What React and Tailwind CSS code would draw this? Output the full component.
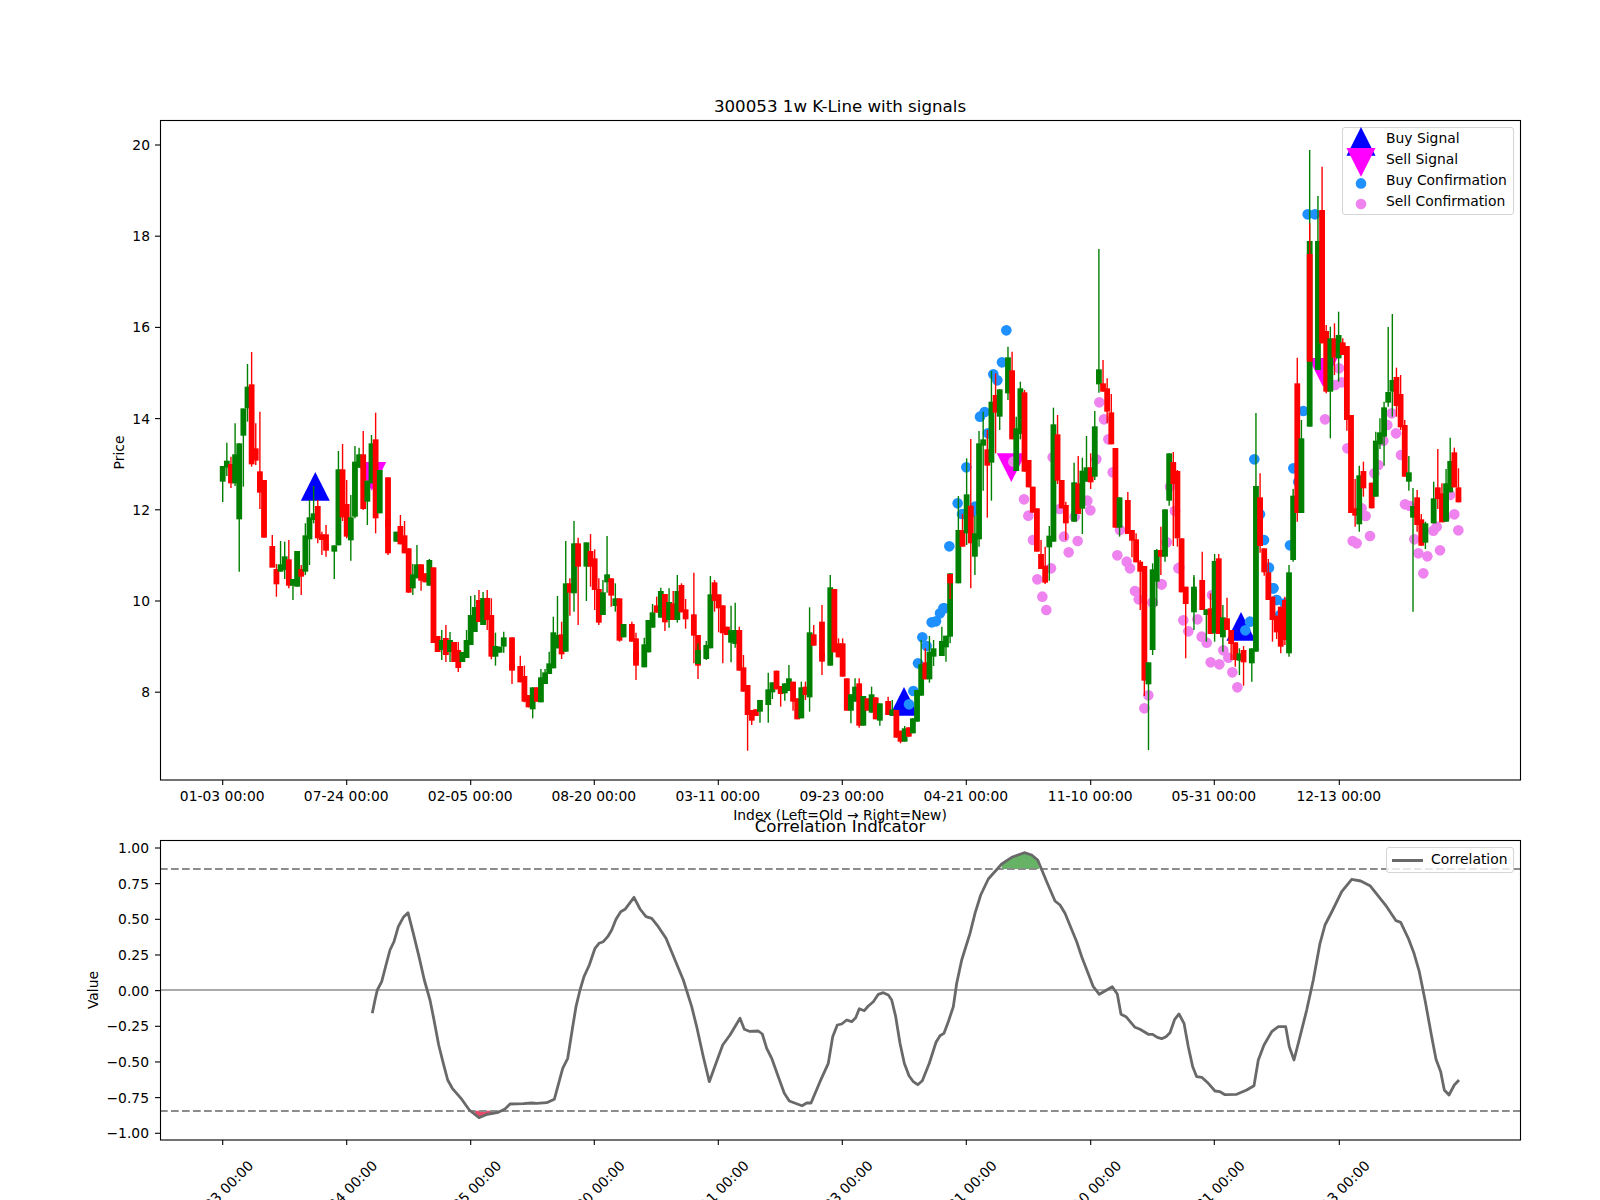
import React from 'react';

// candle rows are read off crops: [x, G|R, bodyTop, bodyBottom, wickTop, wickBottom]
const sec = (ox, oy, rows, s = 3) =>
  rows.map(([x, c, t, b, wt, wb]) => ({
    i: Math.round((ox + x / s - 222.7) / 4.133),
    up: c === 'G',
    top: oy + t / s,
    bot: oy + b / s,
    wt: oy + (wt ?? t) / s,
    wb: oy + (wb ?? b) / s,
  }));

const candles = [
  ...sec(150, 340, [
    [218, 'G', 378, 425, 378, 486], [230, 'G', 362, 383, 308, 408], [243, 'R', 372, 430, 350, 444],
    [255, 'G', 343, 430, 250, 438], [269, 'G', 310, 538, 310, 695], [281, 'G', 205, 287, 253, 440],
    [292, 'G', 140, 205, 72, 245], [308, 'R', 133, 373, 36, 380], [321, 'R', 325, 362, 250, 375],
    [335, 'R', 394, 458, 215, 507], [347, 'R', 420, 593], [362, 'R', 618, 683, 585, 670],
    [374, 'R', 687, 733, 672, 770], [387, 'G', 673, 695, 603], [402, 'G', 649, 690, 605, 717],
    [414, 'R', 658, 737, 600, 745], [428, 'G', 717, 737, 717, 780], [440, 'G', 633, 740],
    [456, 'R', 687, 710, 675, 765], [468, 'G', 586, 695, 550, 705], [480, 'G', 532, 598, 480, 675],
    [492, 'G', 520, 540, 438, 550], [507, 'R', 498, 595, 480, 610], [520, 'R', 583, 600, 575, 645],
    [533, 'R', 583, 632, 555, 650], [548, 'G', 616, 635, 616, 717], [560, 'G', 388, 616, 333],
    [572, 'R', 388, 532, 312, 543], [587, 'R', 492, 590, 420, 595], [600, 'G', 532, 601, 465, 662],
    [614, 'G', 365, 530, 318, 535], [626, 'G', 343, 383, 323], [641, 'R', 343, 507, 273, 510],
    [655, 'G', 422, 485, 422, 555], [666, 'G', 310, 430, 285], [678, 'R', 298, 535, 218, 580],
    [692, 'G', 390, 520], [708, 'R', 412, 562, 412, 570], [720, 'R', 538, 640, 538, 645],
    [733, 'G', 575, 605], [747, 'R', 558, 613, 525], [762, 'R', 586, 640, 543],
    [774, 'R', 625, 758], [786, 'G', 703, 745, 672, 765], [800, 'G', 673, 715, 615],
    [812, 'R', 673, 722, 673, 752], [826, 'R', 700, 727], [840, 'G', 660, 737, 657], [855, 'R', 682, 909],
  ]),
  ...sec(0, 0, [
    [437.6, 'R', 636, 652], [441.7, 'G', 640, 650, 630, 660], [445.8, 'R', 638, 655, 625, 662],
    [450, 'G', 640, 652, 632, 662], [454, 'R', 642, 662], [458.3, 'R', 650, 668, 642, 672],
    [462.4, 'G', 652, 662], [466.6, 'G', 640, 658, 630], [470.7, 'G', 615, 645, 596],
    [474.8, 'G', 607, 632, 595], [479, 'R', 600, 622, 590], [483, 'G', 598, 625, 592],
    [487.2, 'R', 598, 620, 590, 630],
  ], 1),
  ...sec(490, 500, [
    [4, 'R', 345, 470, 295, 478], [16, 'G', 438, 470, 398, 497], [29, 'G', 440, 458], [41, 'G', 412, 440, 395, 458],
    [60, 'R', 412, 505], [72, 'R', 490, 512, 490, 552], [86, 'R', 498, 547, 467], [98, 'R', 528, 605, 497, 607],
    [112, 'R', 585, 622], [125, 'G', 562, 628, 562, 655], [137, 'R', 562, 605], [152, 'G', 532, 607, 507],
    [165, 'G', 517, 552, 507], [179, 'G', 490, 522, 455], [191, 'G', 397, 505, 350], [204, 'G', 405, 445, 288],
    [218, 'R', 403, 463, 365, 477], [231, 'G', 250, 455, 123], [243, 'R', 250, 278, 235, 347],
    [257, 'G', 130, 280, 63, 335], [269, 'R', 130, 200, 113, 375], [284, 'G', 127, 200, 127, 303],
    [300, 'R', 153, 200, 102, 260], [312, 'R', 175, 270, 148, 330], [324, 'R', 267, 368, 235, 375],
    [339, 'G', 277, 345, 240], [351, 'G', 223, 247, 108, 278], [366, 'R', 235, 287, 235, 320],
    [378, 'G', 295, 318, 250, 335], [392, 'R', 295, 422, 295, 425], [404, 'G', 372, 412], [420, 'R', 372, 425, 365],
    [432, 'R', 415, 480, 398], [442, 'R', 455, 497, 455, 540], [458, 'G', 433, 502, 413], [471, 'G', 360, 457],
    [485, 'G', 337, 383, 312], [497, 'R', 316, 338, 290], [512, 'G', 273, 353, 263], [525, 'R', 282, 367, 282, 393],
    [537, 'G', 306, 360, 265, 383], [550, 'R', 310, 360, 273], [563, 'G', 273, 360, 225, 368], [578, 'R', 255, 337, 250],
    [591, 'R', 328, 358, 297, 386], [606, 'R', 343, 407, 218, 490], [618, 'R', 405, 497, 405, 537],
    [630, 'G', 450, 492, 430], [644, 'G', 435, 477, 423, 480], [656, 'G', 283, 445, 228], [672, 'R', 247, 303, 240, 335],
    [685, 'R', 283, 325, 283, 397], [699, 'R', 316, 400, 316, 490], [711, 'R', 380, 405], [723, 'G', 390, 428, 317, 487],
    [736, 'G', 390, 432, 308, 443], [750, 'R', 390, 512, 380], [765, 'R', 502, 575, 465], [778, 'R', 555, 645, 555, 752],
    [791, 'R', 630, 662, 630, 675], [803, 'R', 628, 648], [815, 'G', 600, 635, 600, 668], [831, 'G', 568, 615, 518, 668],
    [843, 'G', 547, 577, 547, 597], [858, 'R', 512, 568], [870, 'R', 558, 582, 558, 620], [884, 'G', 550, 580, 550, 602],
    [897, 'G', 535, 573, 495], [908, 'R', 545, 605, 545, 632], [923, 'R', 595, 658], [936, 'G', 562, 655, 545],
    [948, 'R', 560, 585, 545, 600], [962, 'G', 397, 592, 322, 635], [977, 'R', 403, 437, 375], [990, 'R', 365, 470, 315],
    [1002, 'R', 460, 485, 460, 525], [1017, 'G', 262, 497, 225],
  ]),
  ...sec(830, 560, [
    [8, 'R', 87, 277], [22, 'R', 250, 292, 235], [36, 'R', 250, 350, 235], [50, 'R', 355, 452],
    [62, 'G', 403, 452, 403, 490], [76, 'G', 380, 425, 355], [90, 'R', 370, 497, 355, 503], [102, 'G', 408, 497],
    [114, 'R', 415, 452], [128, 'G', 403, 458, 380], [143, 'R', 412, 478], [155, 'G', 430, 482, 430, 497],
    [170, 'R', 423, 465, 410], [182, 'G', 448, 467, 420], [195, 'R', 450, 533], [207, 'R', 512, 545, 512, 550],
    [220, 'G', 505, 545, 498], [236, 'R', 502, 530], [248, 'G', 475, 520], [264, 'G', 390, 485],
    [277, 'G', 313, 407, 240], [288, 'R', 307, 358, 265], [303, 'G', 275, 358, 228, 368], [316, 'G', 265, 290, 240, 318],
    [330, 'G', 243, 288, 200], [343, 'G', 227, 262, 227, 305], [356, 'G', 40, 230, 40, 250], [366, 'R', 42, 70, 42, 117],
  ]),
  ...sec(900, 310, [
    [170, 'G', 660, 820, 558], [185, 'R', 660, 710, 612], [198, 'G', 553, 670, 445, 705], [212, 'R', 587, 700, 387, 835],
    [225, 'G', 670, 740, 617, 795], [240, 'G', 400, 688, 363, 710], [252, 'G', 388, 407, 305, 542],
    [264, 'R', 418, 467, 360, 623], [279, 'G', 275, 458, 183, 572], [291, 'R', 255, 308, 190, 430],
    [305, 'G', 238, 320, 238, 360], [318, 'G', 142, 250, 110, 270], [333, 'R', 181, 388, 125], [345, 'G', 355, 483, 320],
    [357, 'G', 235, 372, 215, 388], [372, 'R', 247, 485, 240], [383, 'R', 450, 532], [398, 'R', 530, 608],
    [411, 'R', 595, 725], [426, 'R', 732, 777, 690], [437, 'R', 767, 818, 710, 822], [450, 'G', 677, 712, 648, 812],
    [465, 'G', 343, 695, 293], [477, 'R', 373, 512, 315, 522], [491, 'R', 510, 595], [502, 'R', 585, 640, 575, 690],
    [518, 'G', 517, 635, 458], [531, 'R', 520, 612, 438], [547, 'G', 482, 596, 443, 672], [558, 'G', 472, 515, 378],
    [570, 'R', 472, 517, 430, 537], [585, 'G', 349, 500, 303, 510], [597, 'G', 178, 223, -183, 248],
    [611, 'R', 220, 245, 150], [622, 'R', 235, 305, 205, 340], [638, 'R', 307, 403, 252],
  ]),
  ...sec(1060, 480, [
    [170, 'R', -96, 143], [182, 'G', 52, 143, 52, 170], [198, 'R', 60, 162, 36], [210, 'R', 150, 182, 150, 232], [225, 'R', 178, 247, 160],
    [237, 'R', 245, 275, 240, 390], [252, 'R', 258, 602, 258, 648], [264, 'G', 547, 613, 547, 810],
    [276, 'G', 268, 510, 250, 525], [291, 'G', 210, 305, 207, 378], [303, 'R', 210, 230, 140, 285], [318, 'G', 88, 230, 88, 245],
    [330, 'G', -80, 62, -80, 77], [345, 'R', -54, 12, -84, 198], [355, 'R', -27, 175, -30, 200], [369, 'R', 175, 337],
    [383, 'R', 320, 372, 320, 535], [396, 'G', 330, 397, 292, 450], [408, 'G', 320, 360, 285], [423, 'R', 300, 390, 215],
    [436, 'G', 388, 405, 388, 485], [449, 'R', 385, 462, 340], [461, 'G', 243, 460, 222, 485], [476, 'R', 235, 462, 222],
    [489, 'G', 412, 472, 375, 515], [503, 'R', 415, 450, 353], [516, 'R', 450, 492, 450, 540], [530, 'R', 487, 540, 487, 560],
    [543, 'G', 520, 542, 505, 585], [555, 'R', 510, 547, 498, 617], [570, 'G', 505, 550, 505, 605], [582, 'G', 18, 515, -201],
    [597, 'R', 52, 198, -20, 218], [609, 'R', 205, 277, 205, 287], [624, 'R', 277, 360, 237], [636, 'R', 350, 420, 350, 485],
    [649, 'R', 407, 457, 407, 477], [660, 'R', 440, 500, 440, 520],
  ]),
  ...sec(1270, 400, [[35, 'R', 620, 690], [48, 'R', 600, 720, 590, 735], [60, 'G', 517, 760, 495, 770], [72, 'G', 287, 480, 267, 485]]),
  ...sec(1270, 110, [
    [87, 'R', 820, 1209, 743, 1235], [100, 'G', 985, 1209, 930], [115, 'G', 393, 950, 120], [125, 'R', 432, 755, 340],
    [138, 'G', 393, 780, 258], [153, 'R', 300, 700, 170], [165, 'R', 663, 845, 645, 850], [180, 'G', 685, 845, 650, 985],
    [192, 'R', 685, 743, 640, 795], [207, 'G', 675, 745, 605, 815], [219, 'R', 697, 735, 685], [231, 'R', 708, 930, 708, 962],
    [245, 'R', 915, 1209],
  ]),
  ...sec(1270, 400, [
    [258, 'R', 325, 347, 237, 380], [272, 'G', 226, 373, 197, 395], [285, 'R', 213, 265, 185, 290], [299, 'R', 248, 325],
    [312, 'G', 122, 290, 95], [325, 'G', 97, 133, 55, 147], [339, 'G', 22, 110, 5, 197], [351, 'G', -24, 8, -219, 20],
    [365, 'G', -60, -25, -258, 50], [378, 'R', -69, 18, -97, 50], [392, 'R', -18, 82, -75, 90], [405, 'R', 75, 230, 60],
    [417, 'G', 217, 245, 168, 272], [433, 'G', 318, 353, 264, 635], [445, 'R', 292, 375, 270, 395], [459, 'R', 358, 437, 342],
    [471, 'G', 370, 428, 365, 447], [486, 'G', 295, 370, 245], [499, 'R', 262, 297, 147, 327], [510, 'R', 280, 367, 250],
    [525, 'G', 250, 365, 207], [537, 'G', 183, 277, 113], [552, 'R', 157, 262, 143], [564, 'R', 262, 307, 205],
  ]),
];

const pts = (ox, oy, list) => list.map(([x, y]) => [ox + x / 3, oy + y / 3]);

const blueDots = [
  ...pts(830, 560, [[237, 433], [250, 393], [264, 310], [277, 232], [290, 258], [305, 187], [318, 184], [330, 160], [343, 145]]),
  ...pts(900, 310, [[319, 61], [306, 157], [280, 193], [292, 211], [254, 306], [240, 320], [264, 370], [199, 472], [173, 580], [186, 612], [225, 590], [216, 605], [148, 709], [130, 895]]),
  ...pts(1060, 230, [[583, 688]]),
  ...pts(1060, 480, [[556, 451], [570, 425], [600, 103], [612, 180], [627, 263], [640, 325], [650, 360], [660, 405]]),
  ...pts(1270, 110, [[113, 313], [135, 313]]),
  ...pts(1270, 400, [[70, 205], [85, 245], [60, 436], [100, 33], [10, 565], [20, 600], [44, 610], [35, 645]]),
];

const pinkDots = [
  ...pts(900, 310, [[598, 277], [612, 328], [625, 388], [638, 487], [652, 736], [680, 755], [690, 775], [705, 843], [716, 868], [758, 878], [785, 823], [838, 773], [825, 603], [810, 530], [800, 697], [660, 660], [372, 568], [385, 617], [399, 690], [412, 808], [427, 860], [439, 900], [453, 775], [458, 442], [479, 597], [492, 680], [506, 727], [533, 693], [571, 601], [562, 572], [524, 620], [589, 448], [340, 455]]),
  ...pts(1060, 480, [[370, 421], [385, 454], [412, 418], [425, 470], [440, 488], [452, 547], [478, 553], [490, 511], [505, 533], [517, 577], [532, 622], [265, 646], [253, 685], [456, 345], [278, 367], [305, 313], [320, 187], [345, 93], [355, 265]]),
  ...pts(1270, 110, [[165, 928], [195, 825], [207, 775], [215, 817]]),
  ...pts(1270, 400, [[232, 145], [340, 122], [352, 75], [378, 100], [365, 40], [393, 165], [325, 195], [313, 220], [275, 325], [287, 348], [300, 408], [248, 423], [260, 430], [405, 313], [420, 318], [433, 418], [445, 460], [472, 469], [460, 520], [490, 392], [500, 380], [510, 451], [553, 343], [565, 391], [540, 285], [525, 350]]),
];

const corr = [
  ...pts(80, 770, [[877, 730], [885, 690], [892, 660], [905, 635], [918, 585], [930, 540], [942, 515], [955, 470], [970, 442], [984, 428], [1000, 490], [1017, 560], [1033, 630], [1050, 690], [1062, 750], [1076, 825], [1090, 880], [1103, 930], [1117, 955], [1143, 985], [1168, 1020], [1197, 1043], [1222, 1033], [1255, 1027], [1275, 1017], [1290, 1002], [1330, 1001], [1355, 999], [1370, 1000], [1400, 998], [1423, 988], [1448, 895], [1463, 865], [1478, 770], [1488, 710]]),
  ...pts(560, 770, [[60, 660], [72, 620], [88, 585], [105, 535], [117, 520], [130, 515], [143, 500], [155, 480], [168, 448], [182, 425], [195, 418], [222, 382], [240, 417], [258, 440], [275, 445], [295, 470], [318, 505], [345, 570], [370, 630], [395, 710], [410, 770], [430, 860], [448, 935], [468, 880], [488, 825], [510, 795], [540, 745], [553, 778], [568, 784], [595, 783], [607, 792], [620, 835], [635, 865], [655, 920], [673, 970], [688, 993], [726, 1007], [740, 999], [753, 999], [780, 935], [805, 880], [818, 800], [832, 765], [845, 762], [860, 750], [875, 755], [887, 743], [898, 716], [913, 722], [925, 708], [940, 695], [955, 673], [970, 668], [985, 675], [995, 690], [1007, 740], [1020, 820], [1033, 880], [1047, 917], [1060, 935], [1073, 944], [1087, 932], [1108, 880], [1128, 817], [1140, 797], [1152, 790], [1165, 755], [1180, 710], [1190, 640], [1205, 570], [1230, 490], [1245, 430], [1262, 375], [1285, 327], [1325, 282], [1355, 262], [1393, 248], [1415, 255], [1433, 270], [1460, 335], [1485, 393]]),
  ...pts(1040, 770, [[60, 405], [75, 430], [110, 515], [125, 560], [160, 650], [178, 673], [195, 663], [217, 650], [232, 672], [243, 733], [258, 740], [285, 772], [300, 778], [325, 793], [338, 793], [352, 802], [365, 806], [378, 800], [390, 788], [404, 748], [417, 732], [432, 760], [445, 830], [458, 890], [470, 920], [485, 922], [505, 940], [525, 963], [540, 965], [555, 974], [590, 973], [620, 960], [642, 947], [655, 870], [672, 825], [695, 785], [715, 770], [737, 770], [748, 830], [762, 870], [780, 800], [800, 720], [820, 630], [840, 520], [855, 465], [878, 420], [905, 365], [935, 328], [962, 333], [990, 347], [1040, 410], [1068, 452], [1082, 457], [1105, 505], [1122, 550], [1138, 605], [1155, 690], [1175, 800], [1188, 868], [1202, 905], [1213, 960], [1227, 975], [1243, 945], [1257, 930]]),
];

const toPath = (list) => list.map(([x, y]) => `${x.toFixed(1)},${y.toFixed(1)}`).join(' ');

const greenFill = pts(560, 770, [[1325, 297], [1325, 282], [1355, 262], [1393, 248], [1415, 255], [1433, 270], [1438, 297]]);
const redFill = pts(80, 770, [[1180, 1022], [1197, 1043], [1222, 1033], [1255, 1027], [1264, 1022]]);

const xTicks = [
  [222.7, '01-03 00:00'], [346.7, '07-24 00:00'], [470.7, '02-05 00:00'], [594.3, '08-20 00:00'], [718.3, '03-11 00:00'],
  [842.3, '09-23 00:00'], [966.3, '04-21 00:00'], [1090.7, '11-10 00:00'], [1214.3, '05-31 00:00'], [1339.3, '12-13 00:00'],
];
const priceTicks = [20, 18, 16, 14, 12, 10, 8];
const valueTicks = ['1.00', '0.75', '0.50', '0.25', '0.00', '−0.25', '−0.50', '−0.75', '−1.00'];

const Tri = ({ cx, y, down, fill }) => (
  <polygon
    fill={fill}
    points={down
      ? `${cx - 14.5},${y} ${cx + 14.5},${y} ${cx},${y + 28.7}`
      : `${cx},${y} ${cx + 14.5},${y + 28.7} ${cx - 14.5},${y + 28.7}`}
  />
);

const Candle = ({ c }) => {
  const x = 222.7 + c.i * 4.133;
  const color = c.up ? '#008000' : '#ff0000';
  return (
    <g>
      <line x1={x} x2={x} y1={c.wt} y2={c.wb} stroke={color} strokeWidth="1.4" />
      <rect x={x - 2.9} y={c.top} width="5.8" height={Math.max(c.bot - c.top, 1)} fill={color} />
    </g>
  );
};

const legendRows = [
  ['Buy Signal', <polygon key="b" fill="#0000ff" points="0,-12 14.5,16.7 -14.5,16.7" />],
  ['Sell Signal', <polygon key="s" fill="#ff00ff" points="-14.5,-12 14.5,-12 0,16.7" />],
  ['Buy Confirmation', <circle key="bc" cx="0" cy="2.4" r="5.3" fill="#1e90ff" />],
  ['Sell Confirmation', <circle key="sc" cx="0" cy="2" r="5.3" fill="#ee82ee" />],
];

const PriceChart = () => (
  <section className="relative">
    <h2 className="h-[120px] pl-[160px] pr-[80px] pb-[3px] flex items-end justify-center text-[16.67px] leading-[20px] font-normal">
      300053 1w K-Line with signals
    </h2>
    <div className="relative h-[696px]">
      <svg className="block overflow-visible w-[1600px] h-[696px] text-[13.89px]" viewBox="0 120 1600 696">
        <Tri cx={315.3} y={472} fill="#0000ff" />
        <Tri cx={371.7} y={462} down fill="#ff00ff" />
        <Tri cx={904} y={687} fill="#0000ff" />
        <Tri cx={1011.3} y={453.3} down fill="#ff00ff" />
        <Tri cx={1241} y={612} fill="#0000ff" />
        <Tri cx={1323} y={358} down fill="#ff00ff" />
        {pinkDots.map(([x, y], i) => <circle key={i} cx={x} cy={y} r="5.3" fill="#ee82ee" />)}
        {blueDots.map(([x, y], i) => <circle key={i} cx={x} cy={y} r="5.3" fill="#1e90ff" />)}
        {candles.map((c, i) => <Candle key={i} c={c} />)}
        <rect x="160.5" y="120.5" width="1360" height="659.5" fill="none" stroke="#000" strokeWidth="1.1" />
        {xTicks.map(([x, label]) => (
          <g key={label}>
            <line x1={x} x2={x} y1="780" y2="785" stroke="#000" strokeWidth="1.1" />
            <text x={x - 0.5} y="801" textAnchor="middle">{label}</text>
          </g>
        ))}
        {priceTicks.map((p) => {
          const y = 145 + (20 - p) * 45.6;
          return (
            <g key={p}>
              <line x1="155" x2="160" y1={y} y2={y} stroke="#000" strokeWidth="1.1" />
              <text x="150" y={y + 5} textAnchor="end">{p}</text>
            </g>
          );
        })}
        <text transform="translate(124 452.5) rotate(-90)" textAnchor="middle">Price</text>
        <text x="840" y="820" textAnchor="middle">Index (Left=Old → Right=New)</text>
      </svg>
      <div className="absolute left-[1342px] top-[7px] w-[171.5px] h-[88px] bg-white/80 border border-[#d5d5d5] rounded-[3px] text-[13.89px]">
        {legendRows.map(([label, marker]) => (
          <div key={label} className="h-[21px] flex items-center">
            <svg className="w-[30px] h-[30px] shrink-0 ml-[3px] mr-[10px] overflow-visible" viewBox="-15 -15 30 30">
              {marker}
            </svg>
            <span className="leading-none whitespace-nowrap">{label}</span>
          </div>
        ))}
      </div>
    </div>
  </section>
);

const CorrelationChart = () => (
  <section className="relative">
    <h2 className="h-[24px] pl-[160px] pr-[80px] pt-[1px] text-center text-[16.67px] leading-[20px] font-normal">
      Correlation Indicator
    </h2>
    <div className="relative h-[360px]">
      <svg className="block overflow-visible w-[1600px] h-[360px] text-[13.89px]" viewBox="0 840 1600 360">
        <polygon points={toPath(greenFill)} fill="#66b366" />
        <polygon points={toPath(redFill)} fill="#e84a6a" />
        <line x1="160" x2="1520" y1="990" y2="990" stroke="#aaa" strokeWidth="2" />
        <line x1="160" x2="1520" y1="869" y2="869" stroke="#8c8c8c" strokeWidth="2" strokeDasharray="7.7 3.3" />
        <line x1="160" x2="1520" y1="1111" y2="1111" stroke="#8c8c8c" strokeWidth="2" strokeDasharray="7.7 3.3" />
        <polyline points={toPath(corr)} fill="none" stroke="#696969" strokeWidth="2.8" strokeLinejoin="round" />
        <rect x="160.5" y="840.5" width="1360" height="299.5" fill="none" stroke="#000" strokeWidth="1.1" />
        {valueTicks.map((v, i) => {
          const y = 848 + i * 35.66;
          return (
            <g key={v}>
              <line x1="155" x2="160" y1={y} y2={y} stroke="#000" strokeWidth="1.1" />
              <text x="149" y={y + 5} textAnchor="end">{v}</text>
            </g>
          );
        })}
        {xTicks.map(([x, label]) => (
          <g key={label}>
            <line x1={x} x2={x} y1="1140" y2="1145" stroke="#000" strokeWidth="1.1" />
            <text transform={`translate(${x - 2} 1193) rotate(-45)`} textAnchor="middle" dominantBaseline="central">{label}</text>
          </g>
        ))}
        <text transform="translate(98 990) rotate(-90)" textAnchor="middle">Value</text>
      </svg>
      <div className="absolute left-[1386px] top-[7px] w-[127.5px] h-[26px] bg-white/80 border border-[#d5d5d5] rounded-[3px] flex items-center pl-[5px] gap-[8px] text-[13.89px]">
        <span className="w-[31px] h-[3px] bg-[#696969]" />
        <span className="leading-none">Correlation</span>
      </div>
    </div>
  </section>
);

export default function App() {
  return (
    <div className="w-[1600px] h-[1200px] overflow-hidden bg-white text-black font-['DejaVu_Sans',sans-serif]">
      <PriceChart />
      <CorrelationChart />
    </div>
  );
}
